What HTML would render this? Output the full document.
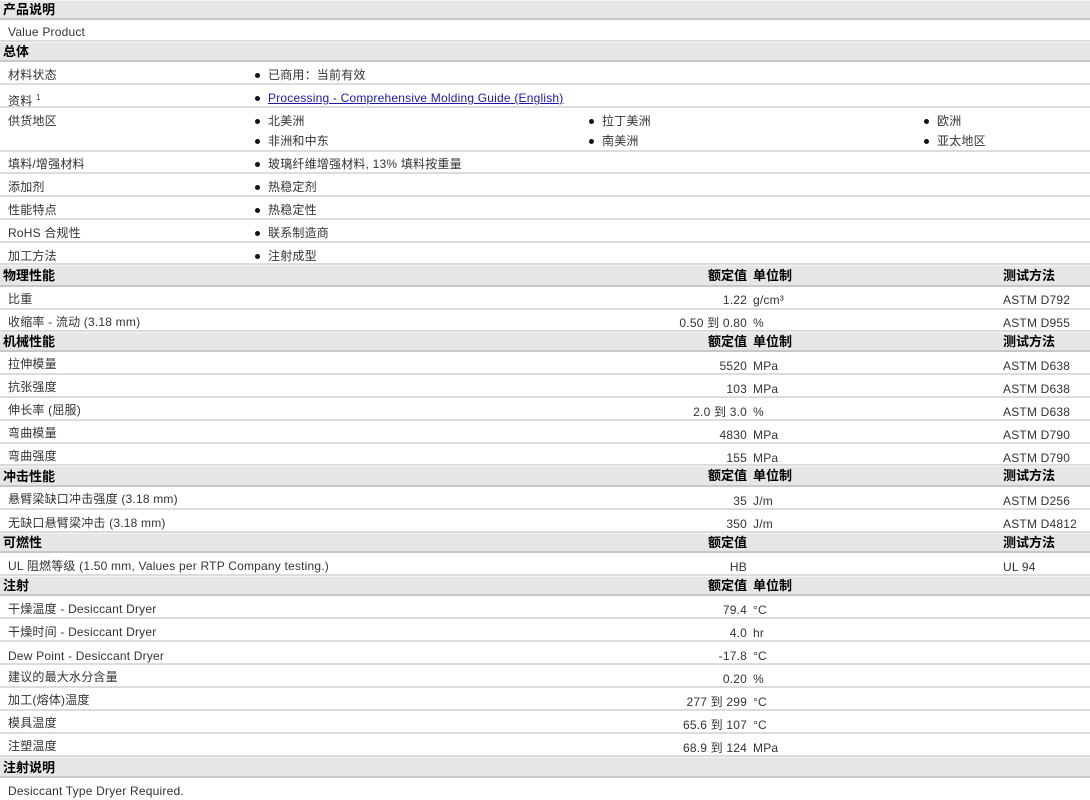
<!DOCTYPE html>
<html><head><meta charset="utf-8"><style>
*{margin:0;padding:0;box-sizing:border-box}
body{width:1090px;height:798px;overflow:hidden;background:#fff;font-family:"Liberation Sans","Noto Sans CJK SC",sans-serif;font-size:12px;color:#333;position:relative;letter-spacing:0.2px}
.r{position:absolute;left:0;width:1090px;border-bottom:2px solid #dcdcdc;background:#fff}
.h{position:absolute;left:0;width:1090px;background:#e6e6e6;border-bottom:2px solid #c8c8c8;border-top:1px solid #f4f4f4;font-weight:bold;color:#000;font-size:13px;letter-spacing:0}
.t{position:absolute;white-space:nowrap;line-height:14px;margin-top:1px}
.v{position:absolute;right:343px;text-align:right;white-space:nowrap;line-height:14px;margin-top:1px}
.b::before{content:"";position:absolute;left:-13px;top:5px;width:5px;height:5px;border-radius:50%;background:#111}
a{color:#1a1aa6;text-decoration:underline}
</style></head><body>

<div class="h" style="top:0;height:20px"><span class="t" style="left:3px;top:1px">产品说明</span></div>
<div class="r" style="top:20px;height:22px"><span class="t" style="left:8px;top:4px">Value Product</span></div>
<div class="h" style="top:42px;height:20px"><span class="t" style="left:3px;top:1px">总体</span></div>

<div class="r" style="top:62px;height:23px"><span class="t" style="left:8px;top:5px">材料状态</span><span class="t b" style="left:268px;top:5px">已商用：当前有效</span></div>
<div class="r" style="top:85px;height:23px"><span class="t" style="left:8px;top:5px">资料 <sup style="font-size:8px">1</sup></span><span class="t b" style="left:268px;top:5px"><a>Processing - Comprehensive Molding Guide (English)</a></span></div>
<div class="r" style="top:108px;height:44px">
<span class="t" style="left:8px;top:5px">供货地区</span>
<span class="t b" style="left:268px;top:5px">北美洲</span><span class="t b" style="left:602px;top:5px">拉丁美洲</span><span class="t b" style="left:937px;top:5px">欧洲</span>
<span class="t b" style="left:268px;top:25px">非洲和中东</span><span class="t b" style="left:602px;top:25px">南美洲</span><span class="t b" style="left:937px;top:25px">亚太地区</span>
</div>
<div class="r" style="top:152px;height:22px"><span class="t" style="left:8px;top:4px">填料/增强材料</span><span class="t b" style="left:268px;top:4px">玻璃纤维增强材料, 13% 填料按重量</span></div>
<div class="r" style="top:174px;height:23px"><span class="t" style="left:8px;top:5px">添加剂</span><span class="t b" style="left:268px;top:5px">热稳定剂</span></div>
<div class="r" style="top:197px;height:23px"><span class="t" style="left:8px;top:5px">性能特点</span><span class="t b" style="left:268px;top:5px">热稳定性</span></div>
<div class="r" style="top:220px;height:23px"><span class="t" style="left:8px;top:5px">RoHS 合规性</span><span class="t b" style="left:268px;top:5px">联系制造商</span></div>
<div class="r" style="top:243px;height:22px"><span class="t" style="left:8px;top:5px">加工方法</span><span class="t b" style="left:268px;top:5px">注射成型</span></div>

<div class="h" style="top:265px;height:22px"><span class="t" style="left:3px;top:2px">物理性能</span><span class="v" style="top:2px">额定值</span><span class="t" style="left:753px;top:2px">单位制</span><span class="t" style="left:1003px;top:2px">测试方法</span></div>
<div class="r" style="top:287px;height:23px"><span class="t" style="left:8px;top:4px">比重</span><span class="v" style="top:5px">1.22</span><span class="t" style="left:753px;top:5px">g/cm³</span><span class="t" style="left:1003px;top:5px">ASTM D792</span></div>
<div class="r" style="top:310px;height:22px"><span class="t" style="left:8px;top:4px">收缩率 - 流动 (3.18 mm)</span><span class="v" style="top:5px">0.50 到 0.80</span><span class="t" style="left:753px;top:5px">%</span><span class="t" style="left:1003px;top:5px">ASTM D955</span></div>

<div class="h" style="top:332px;height:20px"><span class="t" style="left:3px;top:1px">机械性能</span><span class="v" style="top:1px">额定值</span><span class="t" style="left:753px;top:1px">单位制</span><span class="t" style="left:1003px;top:1px">测试方法</span></div>
<div class="r" style="top:352px;height:23px"><span class="t" style="left:8px;top:4px">拉伸模量</span><span class="v" style="top:6px">5520</span><span class="t" style="left:753px;top:6px">MPa</span><span class="t" style="left:1003px;top:6px">ASTM D638</span></div>
<div class="r" style="top:375px;height:23px"><span class="t" style="left:8px;top:4px">抗张强度</span><span class="v" style="top:6px">103</span><span class="t" style="left:753px;top:6px">MPa</span><span class="t" style="left:1003px;top:6px">ASTM D638</span></div>
<div class="r" style="top:398px;height:23px"><span class="t" style="left:8px;top:4px">伸长率 (屈服)</span><span class="v" style="top:6px">2.0 到 3.0</span><span class="t" style="left:753px;top:6px">%</span><span class="t" style="left:1003px;top:6px">ASTM D638</span></div>
<div class="r" style="top:421px;height:23px"><span class="t" style="left:8px;top:4px">弯曲模量</span><span class="v" style="top:6px">4830</span><span class="t" style="left:753px;top:6px">MPa</span><span class="t" style="left:1003px;top:6px">ASTM D790</span></div>
<div class="r" style="top:444px;height:22px"><span class="t" style="left:8px;top:4px">弯曲强度</span><span class="v" style="top:6px">155</span><span class="t" style="left:753px;top:6px">MPa</span><span class="t" style="left:1003px;top:6px">ASTM D790</span></div>

<div class="h" style="top:466px;height:21px"><span class="t" style="left:3px;top:2px">冲击性能</span><span class="v" style="top:1px">额定值</span><span class="t" style="left:753px;top:1px">单位制</span><span class="t" style="left:1003px;top:1px">测试方法</span></div>
<div class="r" style="top:487px;height:23px"><span class="t" style="left:8px;top:4px">悬臂梁缺口冲击强度 (3.18 mm)</span><span class="v" style="top:6px">35</span><span class="t" style="left:753px;top:6px">J/m</span><span class="t" style="left:1003px;top:6px">ASTM D256</span></div>
<div class="r" style="top:510px;height:23px"><span class="t" style="left:8px;top:5px">无缺口悬臂梁冲击 (3.18 mm)</span><span class="v" style="top:6px">350</span><span class="t" style="left:753px;top:6px">J/m</span><span class="t" style="left:1003px;top:6px">ASTM D4812</span></div>

<div class="h" style="top:533px;height:20px"><span class="t" style="left:3px;top:1px">可燃性</span><span class="v" style="top:1px">额定值</span><span class="t" style="left:1003px;top:1px">测试方法</span></div>
<div class="r" style="top:553px;height:23px"><span class="t" style="left:8px;top:5px">UL 阻燃等级 (1.50 mm, Values per RTP Company testing.)</span><span class="v" style="top:6px">HB</span><span class="t" style="left:1003px;top:6px">UL 94</span></div>

<div class="h" style="top:576px;height:20px"><span class="t" style="left:3px;top:1px">注射</span><span class="v" style="top:1px">额定值</span><span class="t" style="left:753px;top:1px">单位制</span></div>
<div class="r" style="top:596px;height:23px"><span class="t" style="left:8px;top:5px">干燥温度 - Desiccant Dryer</span><span class="v" style="top:6px">79.4</span><span class="t" style="left:753px;top:6px">°C</span></div>
<div class="r" style="top:619px;height:23px"><span class="t" style="left:8px;top:5px">干燥时间 - Desiccant Dryer</span><span class="v" style="top:6px">4.0</span><span class="t" style="left:753px;top:6px">hr</span></div>
<div class="r" style="top:642px;height:23px"><span class="t" style="left:8px;top:6px">Dew Point - Desiccant Dryer</span><span class="v" style="top:6px">-17.8</span><span class="t" style="left:753px;top:6px">°C</span></div>
<div class="r" style="top:665px;height:23px"><span class="t" style="left:8px;top:4px">建议的最大水分含量</span><span class="v" style="top:6px">0.20</span><span class="t" style="left:753px;top:6px">%</span></div>
<div class="r" style="top:688px;height:23px"><span class="t" style="left:8px;top:4px">加工(熔体)温度</span><span class="v" style="top:6px">277 到 299</span><span class="t" style="left:753px;top:6px">°C</span></div>
<div class="r" style="top:711px;height:23px"><span class="t" style="left:8px;top:4px">模具温度</span><span class="v" style="top:6px">65.6 到 107</span><span class="t" style="left:753px;top:6px">°C</span></div>
<div class="r" style="top:734px;height:23px"><span class="t" style="left:8px;top:4px">注塑温度</span><span class="v" style="top:6px">68.9 到 124</span><span class="t" style="left:753px;top:6px">MPa</span></div>

<div class="h" style="top:757px;height:21px"><span class="t" style="left:3px;top:2px">注射说明</span></div>
<div class="r" style="top:778px;height:22px;border-bottom:none"><span class="t" style="left:8px;top:5px">Desiccant Type Dryer Required.</span></div>

</body></html>
